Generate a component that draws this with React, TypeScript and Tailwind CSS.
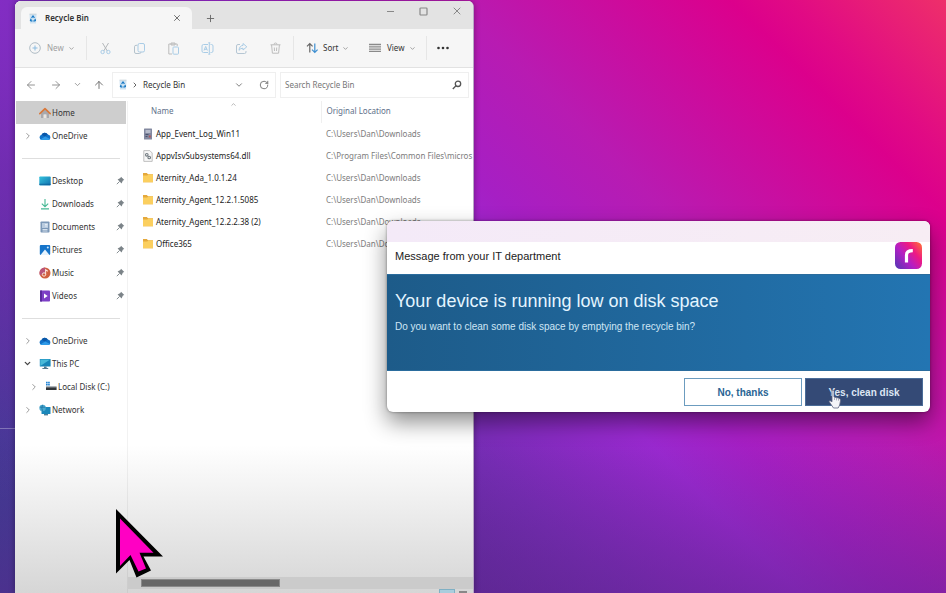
import type { ReactNode } from 'react'
import { ArrowLeft, ArrowRight, ArrowUp, ChevronDown, ChevronRight, ChevronUp, Plus, RotateCw, X } from 'lucide-react'

const RecycleIcon = () => (
  <svg width="8" height="11" viewBox="0 0 8 11" className="shrink-0">
    <path d="M.5 1.5h7L7 10.5H1Z" fill="#cfe3f2" />
    <path d="M.5 1.2h7" stroke="#b9c6d0" strokeWidth=".8" />
    <path d="M2.6 4.8 4 3l1.4 1.8M6 5.8l.4 1.7-2 .6M3.4 8.1l-1.900-.6.6-1.700" fill="none" stroke="#1477c4" strokeWidth="1.2" />
  </svg>
)

const HomeIcon = () => (
  <svg width="12" height="12" viewBox="0 0 12 12">
    <path d="M2 5.5 6 2l4 3.5V11H7.4V7.4H4.6V11H2Z" fill="#a9a9ad" />
    <path d="M4.6 7.4h2.8V11H4.6Z" fill="#e9e4df" />
    <path d="M.8 6.6 6 1.6l5.2 5" fill="none" stroke="#d9783a" strokeWidth="1.6" strokeLinecap="round" strokeLinejoin="round" />
  </svg>
)

const CloudIcon = () => (
  <svg width="12" height="12" viewBox="0 0 12 12">
    <path d="M2.9 10A2.7 2.7 0 0 1 2.6 4.700A3.500 3.500 0 0 1 8.800 4.600 2.750 2.750 0 0 1 9.400 10Z" fill="#1272c8" />
    <path d="M2.600 4.700A3.500 3.500 0 0 1 8.800 4.600L5.800 6.600Z" fill="#0a57a8" />
    <path d="M1.300 9.400 6.200 6.600 11.200 9.100Q10.500 10 9.400 10H2.900Q2 10 1.300 9.400Z" fill="#2f9be8" />
  </svg>
)

const DesktopIcon = () => (
  <svg width="12" height="12" viewBox="0 0 12 12">
    <defs>
      <linearGradient id="desk" x1="0" y1="0" x2="1" y2="1">
        <stop offset="0" stopColor="#35c3dd" />
        <stop offset="1" stopColor="#0f6fae" />
      </linearGradient>
    </defs>
    <rect x=".3" y="1.500" width="11.400" height="9" rx=".8" fill="url(#desk)" />
    <path d="M.3 9.300h11.400" stroke="#0b5d97" strokeWidth=".8" />
  </svg>
)

const DownloadIcon = () => (
  <svg width="12" height="12" viewBox="0 0 12 12" fill="none" stroke="#46b894" strokeWidth="1.100">
    <path d="M6 1v7.500M2.800 5.600 6 8.700l3.200-3.100M2 10.900h8" />
  </svg>
)

const DocumentIcon = () => (
  <svg width="12" height="12" viewBox="0 0 12 12">
    <rect x="1.500" y=".5" width="9" height="11" rx=".8" fill="#7c98b8" />
    <rect x="3" y="2" width="6" height="5" fill="#b9cbdf" />
    <path d="M6 3.500h2.500M6 5h2.500M3.500 8.500h5M3.500 10h5" stroke="#eef4fa" strokeWidth=".8" />
  </svg>
)

const PicturesIcon = () => (
  <svg width="12" height="12" viewBox="0 0 12 12">
    <rect x=".8" y="1" width="10.400" height="10" rx="1" fill="#1674c9" />
    <path d="M1.500 11 6 5.500 10.500 11Z" fill="#e6f3fd" />
    <circle cx="8.800" cy="3.500" r="1" fill="#cfe8fb" />
  </svg>
)

const MusicIcon = () => (
  <svg width="12" height="12" viewBox="0 0 12 12">
    <circle cx="6" cy="6" r="5.500" fill="#d0603f" />
    <path d="M6 .5A5.500 5.500 0 0 0 1 8.300L6 6Z" fill="#b9557b" />
    <circle cx="5" cy="7.500" r="1.700" fill="none" stroke="#fbe3da" strokeWidth="1" />
    <path d="M6.600 7.500V2.800l2.200 1.400" fill="none" stroke="#fbe3da" strokeWidth="1.100" />
  </svg>
)

const VideosIcon = () => (
  <svg width="12" height="12" viewBox="0 0 12 12">
    <rect x="1" y=".5" width="10" height="11" rx=".8" fill="#7d3fc6" />
    <path d="M1 .5h2v11H1Z" fill="#5a2a9d" />
    <path d="M5 3.600 8.700 6 5 8.400Z" fill="#fff" />
  </svg>
)

const PcIcon = () => (
  <svg width="12" height="12" viewBox="0 0 12 12">
    <rect x=".8" y="1" width="10.800" height="7.600" rx=".6" fill="#1585b8" />
    <path d="M1.300 1.500h9.800L1.300 8Z" fill="#47b9d8" />
    <path d="M5 8.600h2.600v1.500H5ZM3.400 10h5.800v1H3.400Z" fill="#53798f" />
  </svg>
)

const DiskIcon = () => (
  <svg width="12" height="12" viewBox="0 0 12 12">
    <path d="M1 .8h1.700v1.700H1ZM3.100.8h1.700v1.700H3.100ZM1 2.900h1.700v1.700H1ZM3.100 2.900h1.700v1.700H3.100Z" fill="#2384d4" />
    <path d="M1 5.200h10.600v1.600H1Z" fill="#9aa2a8" />
    <path d="M1 6.400h10.600v2.600H1Z" fill="#30353a" />
  </svg>
)

const NetworkIcon = () => (
  <svg width="12" height="12" viewBox="0 0 12 12">
    <rect x="2.500" y="3" width="9" height="7" rx=".5" fill="#1b88bb" />
    <path d="M5 10h4v1.400H5Z" fill="#4f7d96" />
    <circle cx="3.600" cy="4" r="3.200" fill="#4ba9cf" />
    <path d="M.8 3.200h5.600M3.600.8Q2 4 3.600 7.200" stroke="#1a6f9e" strokeWidth=".7" fill="none" />
  </svg>
)

const PinIcon = () => (
  <svg width="9" height="9" viewBox="0 0 9 9" className="shrink-0">
    <path d="M5 .7 8.300 4 6.900 4.600 5.600 7.400 1.600 3.400 4.400 2.100Z" fill="#7b8388" />
    <path d="M3.600 5.400.8 8.200" stroke="#7b8388" strokeWidth=".9" />
  </svg>
)

const LogFileIcon = () => (
  <svg width="12" height="12" viewBox="0 0 12 12">
    <rect x="2" y=".5" width="8" height="11" rx=".5" fill="#8389a0" />
    <path d="M3.500 2h5v3h-5Z" fill="#b7bccb" />
    <path d="M3.500 6.500h3M3.500 8.500h2" stroke="#4b536f" strokeWidth="1" />
    <path d="M6.800 7.500h2v2h-2Z" fill="#b0585c" />
  </svg>
)

const DllIcon = () => (
  <svg width="12" height="12" viewBox="0 0 12 12">
    <path d="M1.800.6h6l2.400 2.400v8.400H1.800Z" fill="#f7f7f7" stroke="#a9a9a9" strokeWidth=".7" />
    <circle cx="4.800" cy="4.800" r="1.300" fill="none" stroke="#717a80" strokeWidth="1.100" />
    <circle cx="7.200" cy="7.500" r="1.300" fill="none" stroke="#717a80" strokeWidth="1.100" />
  </svg>
)

const FolderIcon = () => (
  <svg width="12" height="12" viewBox="0 0 12 12">
    <path d="M1 1h3.800l1.200 1.200h5v8H1Z" fill="#e5a93c" />
    <path d="M1 3.400h4.300l1-.9H11v7.800H1Z" fill="#fbcf5f" />
  </svg>
)

const toolIcons: { label: string; icon: ReactNode }[] = [
  {
    label: 'Cut',
    icon: (
      <>
        <path d="M3.500 1 8.300 9M9.500 1 4.700 9" stroke="#b4b8bb" />
        <circle cx="3.600" cy="10" r="1.700" />
        <circle cx="9.400" cy="10" r="1.700" />
      </>
    ),
  },
  {
    label: 'Copy',
    icon: (
      <>
        <rect x="5" y="1.500" width="6.500" height="8.500" rx="1.500" />
        <path d="M4.300 3.300H3A1.500 1.500 0 0 0 1.500 4.800V10A1.500 1.500 0 0 0 3 11.500h3.500A1.500 1.500 0 0 0 8 10.200" stroke="#b4c2cc" />
      </>
    ),
  },
  {
    label: 'Paste',
    icon: (
      <>
        <path d="M5 12H1.800V2h8.400v2M4 1h4v2H4Z" stroke="#bcbcbc" />
        <rect x="6" y="5" width="5.500" height="7.200" rx=".8" />
      </>
    ),
  },
  {
    label: 'Rename',
    icon: (
      <>
        <path d="M7 2.500H2.500A1.500 1.500 0 0 0 1 4v5a1.500 1.500 0 0 0 1.500 1.500H7M9.500 2.500h1A1.500 1.500 0 0 1 12 4v5a1.500 1.500 0 0 1-1.500 1.500h-1M8.300.8v11.400M7.300.8h2M7.300 12.200h2" />
        <path d="M3 8.500 4.700 4.400 6.400 8.500M3.600 7.300h2.200" />
      </>
    ),
  },
  {
    label: 'Share',
    icon: (
      <>
        <path d="M5 2.500H3A1.500 1.500 0 0 0 1.500 4v6A1.500 1.500 0 0 0 3 11.500h6.500A1.500 1.500 0 0 0 11 10V9" stroke="#b5c6d3" />
        <path d="M8 1.500 11.800 4.800 8 8V6.200Q5.500 6 4 8.300 4.500 3.600 8 3.400Z" />
      </>
    ),
  },
  {
    label: 'Delete',
    icon: <path d="M1.500 2.800h10M5 2.500Q5 1 6.500 1T8 2.500M2.600 3l.8 8.200h6.200L10.400 3M5.300 5.500l.2 3.500M7.700 5.500 7.500 9" stroke="#bdbdbd" />,
  },
]

type Place = { name: string; icon: ReactNode; pinned?: boolean; arrow?: 'right' | 'down'; nested?: boolean; active?: boolean }

const groups: Place[][] = [
  [
    { name: 'Home', icon: <HomeIcon />, active: true },
    { name: 'OneDrive', icon: <CloudIcon />, arrow: 'right' },
  ],
  [
    { name: 'Desktop', icon: <DesktopIcon />, pinned: true },
    { name: 'Downloads', icon: <DownloadIcon />, pinned: true },
    { name: 'Documents', icon: <DocumentIcon />, pinned: true },
    { name: 'Pictures', icon: <PicturesIcon />, pinned: true },
    { name: 'Music', icon: <MusicIcon />, pinned: true },
    { name: 'Videos', icon: <VideosIcon />, pinned: true },
  ],
  [
    { name: 'OneDrive', icon: <CloudIcon />, arrow: 'right' },
    { name: 'This PC', icon: <PcIcon />, arrow: 'down' },
    { name: 'Local Disk (C:)', icon: <DiskIcon />, arrow: 'right', nested: true },
    { name: 'Network', icon: <NetworkIcon />, arrow: 'right' },
  ],
]

const files = [
  { name: 'App_Event_Log_Win11', location: 'C:\\Users\\Dan\\Downloads', icon: <LogFileIcon /> },
  { name: 'AppvIsvSubsystems64.dll', location: 'C:\\Program Files\\Common Files\\micros', icon: <DllIcon /> },
  { name: 'Aternity_Ada_1.0.1.24', location: 'C:\\Users\\Dan\\Downloads', icon: <FolderIcon /> },
  { name: 'Aternity_Agent_12.2.1.5085', location: 'C:\\Users\\Dan\\Downloads', icon: <FolderIcon /> },
  { name: 'Aternity_Agent_12.2.2.38 (2)', location: 'C:\\Users\\Dan\\Downloads', icon: <FolderIcon /> },
  { name: 'Office365', location: 'C:\\Users\\Dan\\Downloads', icon: <FolderIcon /> },
]

function TitleBar() {
  return (
    <div className="flex h-7 items-end bg-[#e3e3e3] pl-1.5">
      <div className="flex h-[22px] w-[171px] items-center rounded-t-md bg-[#f6f6f6] pl-2 pr-2.5">
        <RecycleIcon />
        <span className="ml-2 flex-1 font-semibold text-[#333]">Recycle Bin</span>
        <button aria-label="Close tab"><X size={10} strokeWidth={2} className="text-[#555]" /></button>
      </div>
      <button aria-label="New tab" className="flex h-[22px] w-9 items-center justify-center"><Plus size={11} strokeWidth={2} className="text-[#666]" /></button>
      <div className="ml-auto flex h-7 items-start pt-1 text-[#888]">
        <button aria-label="Minimize" className="flex h-3 w-[33px] items-center justify-center">
          <svg width="9" height="9" viewBox="0 0 9 9"><path d="M1 4.500h7" stroke="currentColor" /></svg>
        </button>
        <button aria-label="Maximize" className="flex h-3 w-[33px] items-center justify-center">
          <svg width="9" height="9" viewBox="0 0 9 9"><rect x="1" y="1" width="7" height="7" rx=".8" fill="none" stroke="currentColor" strokeWidth="1.200" /></svg>
        </button>
        <button aria-label="Close" className="flex h-3 w-[33px] items-center justify-center"><X size={12} strokeWidth={2} /></button>
      </div>
    </div>
  )
}

function Toolbar() {
  return (
    <div className="flex h-[39px] items-center border-b border-[#e2e2e2] bg-[#f6f6f6] text-[#333]">
      <button className="flex w-[71px] items-center pl-3.5 text-[#a0a0a0]">
        <svg width="12" height="12" viewBox="0 0 12 12" fill="none" stroke="#b0bcc5">
          <circle cx="6" cy="6" r="5.300" />
          <path d="M6 3.500v5M3.500 6h5" stroke="#8bbbe0" />
        </svg>
        <span className="ml-1.5 mr-1">New</span>
        <ChevronDown size={7} strokeWidth={3} />
      </button>
      <div className="mr-px h-6 w-px bg-[#e6e6e6]" />
      {toolIcons.map((tool) => (
        <button key={tool.label} aria-label={tool.label} className="flex w-[34px] justify-center">
          <svg width="13" height="13" viewBox="0 0 13 13" fill="none" stroke="#a9cce6" strokeWidth="1">{tool.icon}</svg>
        </button>
      ))}
      <div className="ml-px h-6 w-px bg-[#e6e6e6]" />
      <button className="flex w-[63px] items-center pl-3">
        <svg width="13" height="12" viewBox="0 0 13 12" fill="none" strokeWidth="1.200">
          <path d="M3.800 10.500V1.500M1 4.300l2.800-2.800 2.800 2.800" stroke="#666" />
          <path d="M8.800 1.500v9M6 7.700l2.800 2.800 2.800-2.800" stroke="#3d8fd1" />
        </svg>
        <span className="ml-1 mr-1">Sort</span>
        <ChevronDown size={7} strokeWidth={3} className="text-[#999]" />
      </button>
      <button className="flex w-[69px] items-center pl-3">
        <svg width="12" height="10" viewBox="0 0 12 10"><path d="M0 1.500h12M0 3.800h12M0 6.100h12M0 8.400h12" stroke="#8a8a8a" strokeWidth="1.300" /></svg>
        <span className="ml-1.5 mr-1">View</span>
        <ChevronDown size={7} strokeWidth={3} className="text-[#999]" />
      </button>
      <div className="h-6 w-px bg-[#e6e6e6]" />
      <button aria-label="More" className="flex w-8 justify-center">
        <svg width="12" height="4" viewBox="0 0 12 4" fill="#333"><circle cx="1.500" cy="2" r="1.300" /><circle cx="6" cy="2" r="1.300" /><circle cx="10.500" cy="2" r="1.300" /></svg>
      </button>
    </div>
  )
}

function AddressBar() {
  return (
    <div className="flex h-[33px] items-center pr-1 text-[#666]">
      <button aria-label="Back" className="flex w-[30px] justify-end"><ArrowLeft size={12} strokeWidth={1.8} className="mr-2 text-[#888]" /></button>
      <button aria-label="Forward" className="flex w-[22px] justify-center"><ArrowRight size={12} strokeWidth={1.8} className="text-[#888]" /></button>
      <button aria-label="Recent" className="flex w-[21px] justify-center"><ChevronDown size={9} strokeWidth={2.5} className="text-[#999]" /></button>
      <button aria-label="Up" className="flex w-[21px] justify-center"><ArrowUp size={12} strokeWidth={1.8} /></button>
      <div className="ml-[3px] flex h-[26px] flex-1 items-center border border-[#efefef] pl-1.5 pr-1.5">
        <RecycleIcon />
        <ChevronRight size={8} strokeWidth={3} className="mx-1" />
        <span className="flex-1 text-[#333]">Recycle Bin</span>
        <button aria-label="History" className="mr-[15px]"><ChevronDown size={10} strokeWidth={2} /></button>
        <button aria-label="Refresh"><RotateCw size={10} strokeWidth={2} /></button>
      </div>
      <label className="ml-1 flex h-[26px] w-[189px] items-center border border-[#efefef] pl-1 pr-1.5">
        <input type="text" aria-label="Search Recycle Bin" placeholder="Search Recycle Bin" className="w-full min-w-0 bg-transparent outline-none placeholder:text-[#777]" />
        <svg width="10" height="10" viewBox="0 0 10 10" fill="none" stroke="#555" strokeWidth="1.300" className="shrink-0">
          <circle cx="6" cy="3.800" r="2.700" />
          <path d="M4 5.800.8 9" />
        </svg>
      </label>
    </div>
  )
}

function PlaceLink({ place }: { place: Place }) {
  return (
    <a href="#" className={`flex h-[23px] items-center pr-px ${place.nested ? 'pl-[13px]' : 'pl-[7px]'} ${place.active ? 'bg-[#cecece]' : ''}`}>
      <span className="flex w-4 shrink-0">
        {place.arrow === 'right' && <ChevronRight size={10} strokeWidth={2} className="text-[#888]" />}
        {place.arrow === 'down' && <ChevronDown size={9} strokeWidth={3.5} className="text-[#444]" />}
      </span>
      {place.icon}
      <span className="ml-px flex-1 whitespace-nowrap">{place.name}</span>
      {place.pinned && <PinIcon />}
    </a>
  )
}

function Sidebar() {
  return (
    <nav className="w-[113px] shrink-0 border-r border-black/5 pl-px pr-px text-[#333]">
      {groups.map((places, i) => (
        <div key={i}>
          {i > 0 && <div className="mx-1.5 flex h-[22px] items-center"><hr className="w-full border-[#dedede]" /></div>}
          {places.map((place) => <PlaceLink key={place.name} place={place} />)}
        </div>
      ))}
    </nav>
  )
}

function FileList() {
  return (
    <div className="flex min-w-0 flex-1 flex-col">
      <div className="flex-1 overflow-hidden">
        <table className="w-full table-fixed border-collapse text-left">
          <colgroup>
            <col className="w-[193px]" />
            <col />
          </colgroup>
          <thead>
            <tr className="h-[22px] align-top text-[#61718a]">
              <th className="relative pl-[23px] pt-1 font-normal">
                Name
                <ChevronUp size={7} strokeWidth={2} className="absolute left-[102px] top-0 text-[#888]" />
              </th>
              <th className="border-l border-[#efefef] pl-[5px] pt-1 font-normal">Original Location</th>
            </tr>
          </thead>
          <tbody>
            {files.map((file) => (
              <tr key={file.name} className="h-[22px]">
                <td className="p-0 pl-3.5">
                  <div className="flex items-center whitespace-nowrap text-[#222]">
                    {file.icon}
                    <span className="ml-0.5">{file.name}</span>
                  </div>
                </td>
                <td className="whitespace-nowrap p-0 pl-[5px] text-[#7c7c7c]">{file.location}</td>
              </tr>
            ))}
          </tbody>
        </table>
      </div>
      <div className="flex h-3 items-center bg-[#cbcbcb] pl-[13px]">
        <div className="h-2 w-[139px] border border-[#8a8a8a] bg-[#686868]" />
      </div>
      <div className="flex h-1 items-start justify-end gap-1 pr-1.5">
        <div className="h-1 w-4 border border-b-0 border-[#7fb0c4] bg-[#a9cddd]" />
        <div className="mt-0.5 h-0.5 w-2 bg-[#888]" />
      </div>
    </div>
  )
}

function Explorer() {
  return (
    <section className="absolute bottom-0 left-[15px] top-px flex w-[459px] flex-col overflow-hidden rounded-t-md border-r border-[#b9a6c6] bg-white bg-linear-to-b from-white from-75% to-[#d6d6d6] font-['Noto_Sans','Open_Sans',sans-serif] text-[8px] leading-3 shadow-[0_0_6px_rgba(0,0,0,0.35)]">
      <TitleBar />
      <Toolbar />
      <AddressBar />
      <div className="flex min-h-0 flex-1">
        <Sidebar />
        <FileList />
      </div>
    </section>
  )
}

function Logo() {
  return (
    <svg width="27" height="27" viewBox="0 0 27 27">
      <defs>
        <linearGradient id="logo" x1="0" y1=".9" x2="1" y2=".1">
          <stop offset="0" stopColor="#5a35b5" />
          <stop offset=".4" stopColor="#b41fc4" />
          <stop offset=".7" stopColor="#ee1a83" />
          <stop offset="1" stopColor="#ff6a3c" />
        </linearGradient>
      </defs>
      <rect width="27" height="27" rx="5.500" fill="url(#logo)" />
      <path d="M11.500 20.500v-7.500q0-4.300 6.300-4.300" fill="none" stroke="#fff" strokeWidth="3.200" />
    </svg>
  )
}

function Dialog() {
  return (
    <section role="dialog" aria-labelledby="dialog-title" className="absolute right-4 top-[221px] w-[543px] overflow-hidden rounded-md bg-white font-['Liberation_Sans',Arial,sans-serif] shadow-[0_10px_22px_rgba(0,0,0,0.45),0_0_3px_rgba(0,0,0,0.4)]">
      <div className="h-[21px] bg-linear-to-r from-[#f4eaf8] to-[#f7edf4]" />
      <header className="flex h-8 items-start justify-between pl-2 pr-2">
        <span className="pt-1.5 text-[11px] leading-4 text-[#222]">Message from your IT department</span>
        <Logo />
      </header>
      <div className="h-[97px] border-y border-[#2a6c9d] bg-linear-to-r from-[#1d5b89] to-[#2375b2] px-2 pt-3.5">
        <h1 id="dialog-title" className="text-[18px] leading-6 text-[#e4f5ff]">Your device is running low on disk space</h1>
        <p className="mt-2 text-[10px] leading-3 text-[#cfe6f5]">Do you want to clean some disk space by emptying the recycle bin?</p>
      </div>
      <footer className="flex h-[41px] items-start justify-end gap-[3px] pr-[7px] pt-[7px] text-[10px] font-bold">
        <button className="h-7 w-[118px] border border-[#6c9cbf] bg-white text-[#2a6594]">No, thanks</button>
        <button className="h-7 w-[118px] border border-[#4a6c98] bg-[#344a76] text-[#dde6f3]">Yes, clean disk</button>
      </footer>
    </section>
  )
}

export default function App() {
  return (
    <main className="relative h-screen overflow-hidden bg-[#a81cb8] bg-[linear-gradient(to_top,rgba(95,35,140,0.5)_0%,transparent_26%),radial-gradient(ellipse_120px_500px_at_0%_0%,rgba(135,45,200,0.8)_0%,transparent_100%),linear-gradient(45deg,#374090_0%,#572c96_28%,#752db4_40%,#9a29d0_52%,#a61fc4_58%,#b81bb2_68%,#dc008c_86%,#e10b84_90%,#ee2f6a_100%)]">
      <div className="absolute left-0 top-[428px] h-px w-[15px] bg-white/30" />
      <Explorer />
      <Dialog />

      {/* Hand pointer over the confirm button */}
      <svg width="14" height="20" viewBox="0 0 14 20" className="absolute left-[828px] top-[389px]">
        <path d="M4 1.500q1.500-1 2 .8V8l5 1.200q1.800.5 1.500 2.600l-.8 4.200-1.500 3H5.500L1 12.500q.5-1.800 3 .3Z" fill="#f4f4f8" stroke="#5d6580" strokeWidth=".8" />
        <path d="M6.500 8v3M8.500 8.800v2.600M10.500 9.300v2.400" stroke="#8e93a8" strokeWidth=".7" />
      </svg>

      {/* Presenter pointer */}
      <svg width="47" height="69" viewBox="0 0 47 69" className="absolute left-[116px] top-[509px]">
        <path d="M0 0V64.500L13.500 51 20.500 68.500 35 61.500 27.500 47.500H47Z" fill="#000" />
        <path d="M4 9.500V57L14.500 46 22.500 62.500 30 59.500 23.500 43.700H37.500Z" fill="#ff00c3" />
      </svg>
    </main>
  )
}
